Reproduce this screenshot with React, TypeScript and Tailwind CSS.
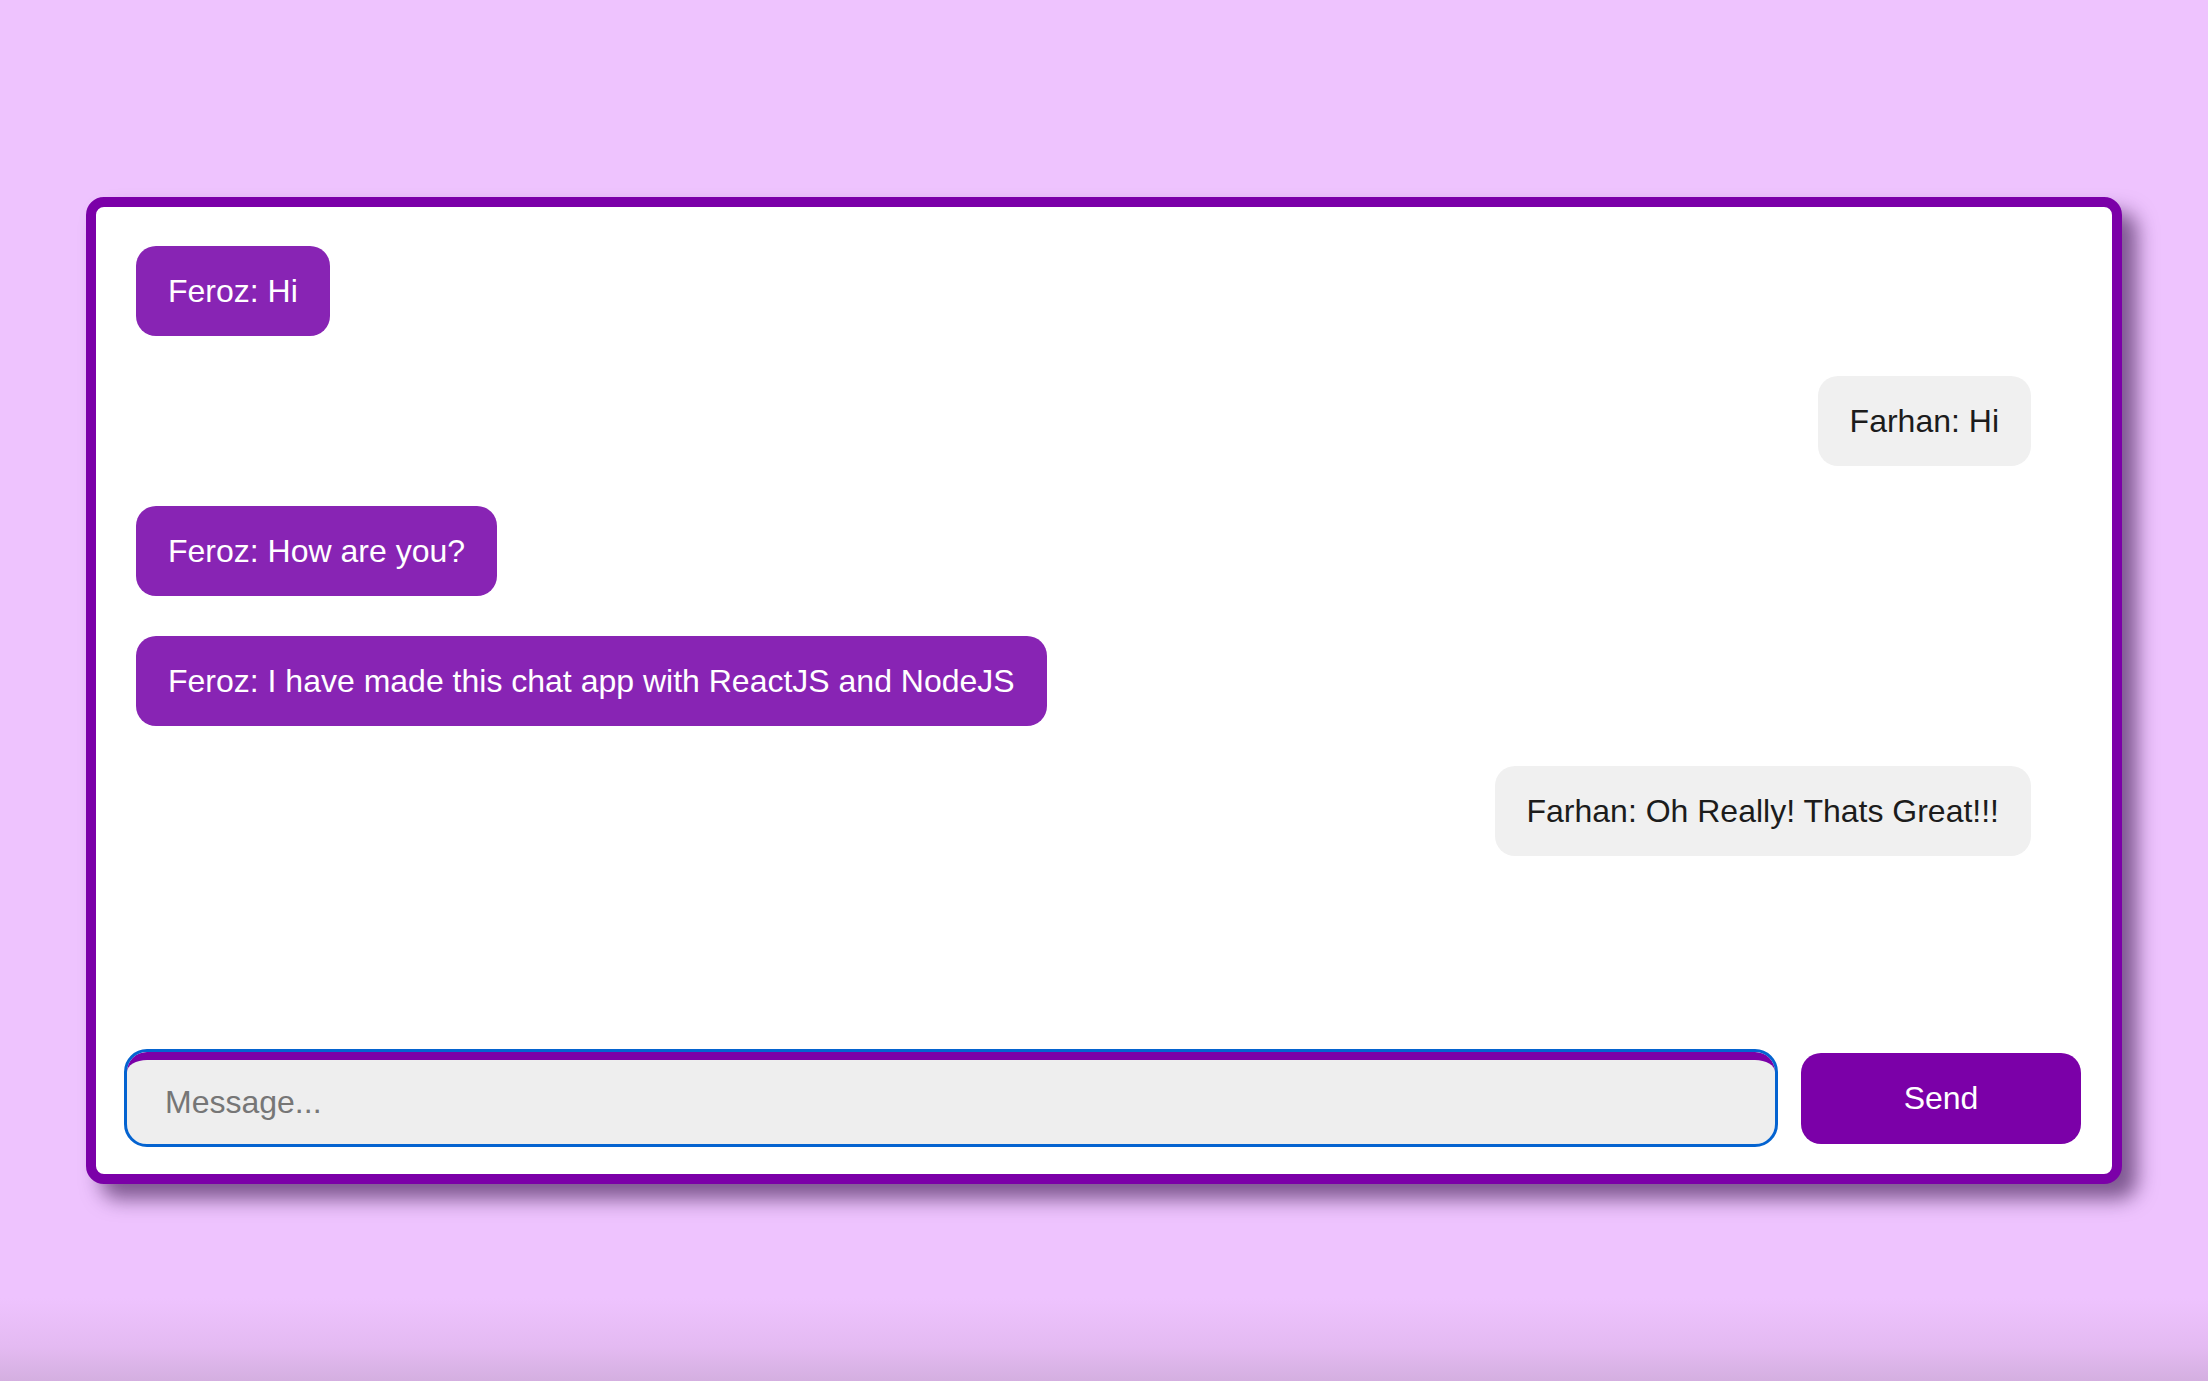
import { useState } from "react";

type Msg = { from: "Feroz" | "Farhan"; text: string };

const MESSAGES: Msg[] = [
  { from: "Feroz", text: "Hi" },
  { from: "Farhan", text: "Hi" },
  { from: "Feroz", text: "How are you?" },
  { from: "Feroz", text: "I have made this chat app with ReactJS and NodeJS" },
  { from: "Farhan", text: "Oh Really! Thats Great!!!" },
];

const ME = "Feroz";

export default function App() {
  const [draft, setDraft] = useState("");

  return (
    <div
      className="min-h-screen w-full flex items-center justify-center bg-[linear-gradient(to_bottom,#eec3fe_0%,#eec3fe_94%,#e4baf2_97.5%,#d4afe0_100%)]"
      style={{ fontFamily: '"Liberation Sans", Arial, Helvetica, sans-serif' }}
    >
      <div className="w-[2036px] h-[987px] flex flex-col bg-white border-[10px] border-[#7b00a8] rounded-[18px] shadow-[15px_15px_20px_rgba(50,15,70,0.6)]">
        <div className="flex-1 flex flex-col gap-[40px] pt-[39px] pl-[40px] pr-[81px] overflow-hidden">
          {MESSAGES.map((m, i) => (
            <Bubble key={i} msg={m} mine={m.from === ME} />
          ))}
        </div>

        <div className="flex items-center gap-[26px] px-[31px] pb-[30px]">
          <input
            value={draft}
            onChange={(e) => setDraft(e.target.value)}
            placeholder="Message..."
            className="flex-1 h-[92px] bg-[#eeeeee] rounded-[20px] border-0 border-t-[8px] border-t-[#7b00a8] outline-solid outline-[3px] outline-[#0463d0] pl-[38px] pr-4 text-[32px] text-[#1c1c1c] placeholder:text-[#767676]"
          />
          <button className="w-[280px] h-[91px] rounded-[20px] bg-[#7b00a8] text-white text-[32px]">
            Send
          </button>
        </div>
      </div>
    </div>
  );
}

function Bubble({ msg, mine }: { msg: Msg; mine: boolean }) {
  return (
    <div className={`flex ${mine ? "justify-start" : "justify-end"}`}>
      <div
        className={`h-[90px] flex items-center px-[32px] rounded-[20px] text-[32px] whitespace-nowrap ${
          mine ? "bg-[#8824b4] text-white" : "bg-[#f0f0f0] text-[#1c1c1c]"
        }`}
      >
        {msg.from}: {msg.text}
      </div>
    </div>
  );
}
